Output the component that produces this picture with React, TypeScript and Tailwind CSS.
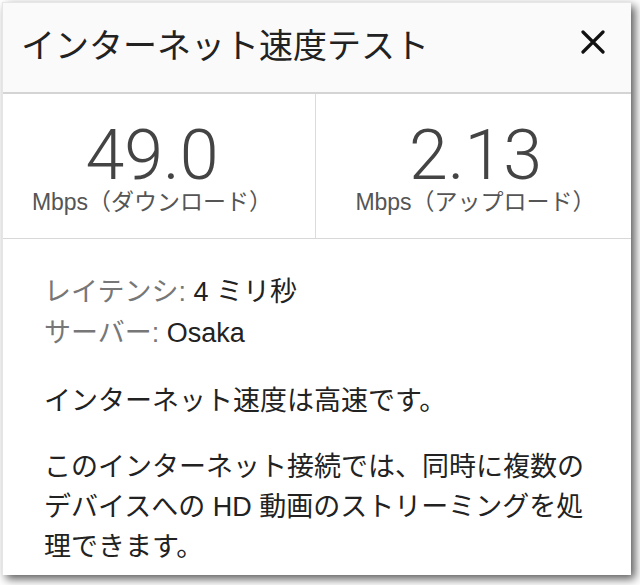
import React from 'react';

const SANS = { fontFamily: '"Liberation Sans", "Noto Sans CJK JP", sans-serif' };

const Metric: React.FC<{ value: string; label: string; className?: string }> = ({ value, label, className }) => (
  <div className={`flex flex-col items-center pt-[30px] ${className ?? ''}`}>
    <div
      className="text-[70px] leading-[62px] font-light text-[#444]"
      style={{ fontFamily: 'Roboto, "Liberation Sans", sans-serif' }}
    >
      {value}
    </div>
    <div className="mt-[2px] text-[23px] leading-[28px] text-[#555] whitespace-nowrap">{label}</div>
  </div>
);

export default function App() {
  return (
    <div className="min-h-screen bg-white p-[2px]" style={SANS}>
      <div className="w-[629px] h-[573px] bg-white flex flex-col border-t border-l border-[#e6e6e6] shadow-[4px_4px_9px_rgba(0,0,0,0.65)]">
        {/* Header */}
        <div className="h-[91px] shrink-0 flex items-start justify-between pl-[18px] pr-[26px] pt-[23px] bg-[#fafafa] border-b-2 border-[#d4d4d4]">
          <h1 className="text-[34px] leading-[40px] text-[#222]">インターネット速度テスト</h1>
          <svg className="mt-[4px]" width="24" height="24" viewBox="0 0 24 24" fill="none">
            <path d="M2 2 L22 22 M22 2 L2 22" stroke="#111" strokeWidth="3.2" strokeLinecap="round" />
          </svg>
        </div>

        {/* Speeds */}
        <div className="h-[145px] shrink-0 grid grid-cols-[313px_1fr] border-b border-[#d8d8d8]">
          <Metric value="49.0" label="Mbps（ダウンロード）" className="border-r border-[#dcdcdc] pr-[14px]" />
          <Metric value="2.13" label="Mbps（アップロード）" className="pl-[4px]" />
        </div>

        {/* Details */}
        <div className="flex-1 pl-[41px] pr-[30px] pt-[33px] text-[#222] text-[27px]">
          <div className="leading-[41px]">
            <span className="text-[#777]">レイテンシ:</span> 4 ミリ秒
          </div>
          <div className="leading-[41px]">
            <span className="text-[#777]">サーバー:</span> Osaka
          </div>
          <p className="mt-[27px] leading-[40px]">インターネット速度は高速です。</p>
          <p className="mt-[26px] leading-[40px]">
            このインターネット接続では、同時に複数の
            <br />
            デバイスへの HD 動画のストリーミングを処
            <br />
            理できます。
          </p>
        </div>
      </div>
    </div>
  );
}
